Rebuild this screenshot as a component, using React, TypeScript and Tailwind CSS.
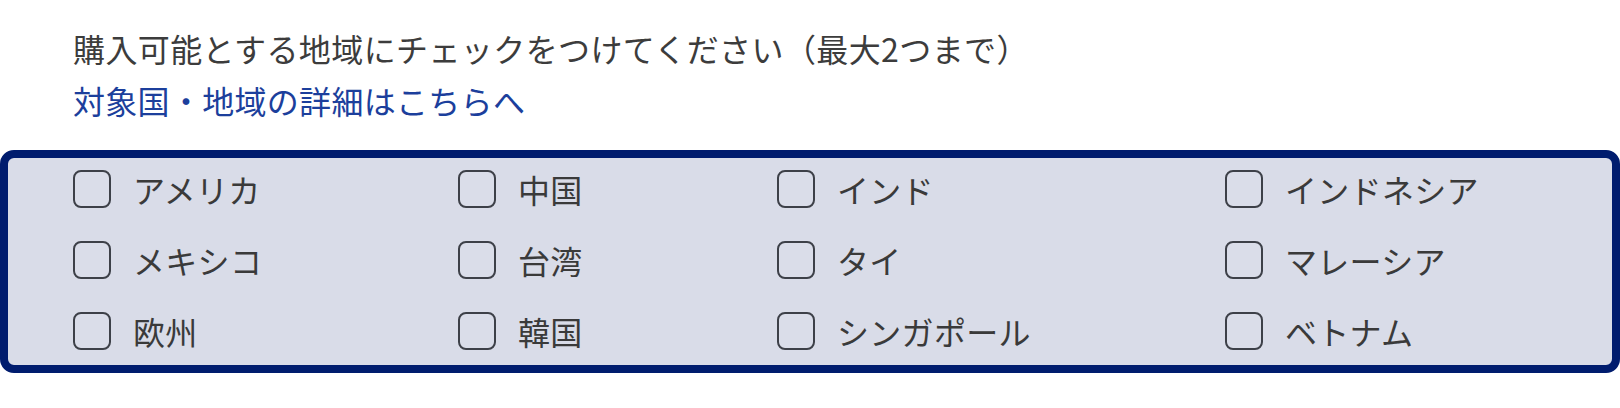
const regions = [
  ["アメリカ", "中国", "インド", "インドネシア"],
  ["メキシコ", "台湾", "タイ", "マレーシア"],
  ["欧州", "韓国", "シンガポール", "ベトナム"],
]

const font = { fontFamily: '"Noto Sans CJK JP", "Noto Sans", sans-serif' }

function RegionCheck({ label }: { label: string }) {
  return (
    <label className="flex items-center gap-[22px] cursor-pointer">
      <input
        type="checkbox"
        className="appearance-none w-[38px] h-[38px] rounded-[8px] border-[2.5px] border-[#3d4048] bg-[#dadde9] shrink-0"
      />
      <span className="text-[32px] tracking-[0.3px] leading-none text-[#3a3a3a]">{label}</span>
    </label>
  )
}

export default function App() {
  return (
    <div className="w-[1620px] h-[408px] bg-white" style={font}>
      <div className="pl-[73px] pt-[22px]">
        <p className="text-[32px] tracking-[0.4px] leading-[52px] text-[#3c3c3c]">
          購入可能とする地域にチェックをつけてください（最大2つまで）
        </p>
        <a href="#" className="block text-[32px] tracking-[0.3px] leading-[52px] text-[#1c3f9c]">
          対象国・地域の詳細はこちらへ
        </a>
      </div>
      <div className="mt-[24px] h-[223px] border-[8px] border-[#001c6e] rounded-[14px] bg-[#d9dce8] pl-[65px] pt-[12px]">
        <div className="grid grid-cols-[385px_319px_448px_1fr] gap-y-[33px]">
          {regions.flat().map((r) => (
            <RegionCheck key={r} label={r} />
          ))}
        </div>
      </div>
    </div>
  )
}
